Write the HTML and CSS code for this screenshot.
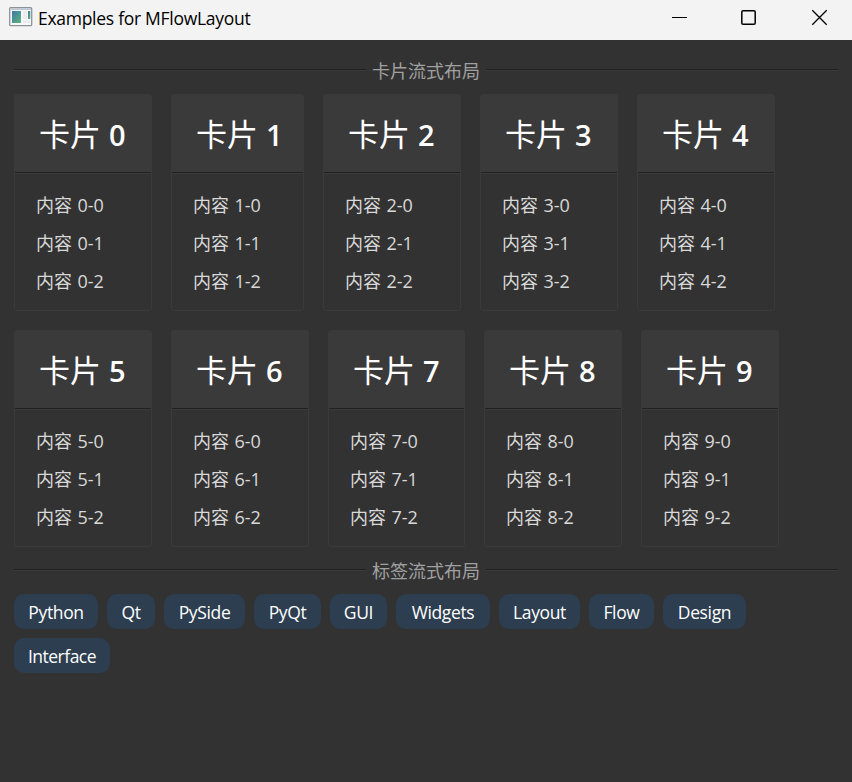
FILE: index.html
```
<!DOCTYPE html>
<html lang="zh-CN">
<head>
<meta charset="utf-8">
<title>Examples for MFlowLayout</title>
<link rel="stylesheet" href="styles.css">
</head>
<body>
<header class="titlebar">
  <svg class="app-icon" width="24" height="20" viewBox="0 0 24 20">
    <defs><linearGradient id="pane" x1="0" y1="0" x2="1" y2="1"><stop offset="0" stop-color="#3f78a8"/><stop offset="1" stop-color="#5fb57c"/></linearGradient></defs>
    <rect x="0.7" y="0.7" width="22" height="18" rx="1" fill="#f7f8f9" stroke="#8e9398" stroke-width="1.3"/>
    <rect x="1.5" y="1.3" width="20.5" height="1.6" fill="#b8c4d2"/>
    <rect x="3" y="4" width="9" height="12" fill="url(#pane)"/>
    <rect x="14" y="4" width="4" height="8" fill="#ececec"/>
    <rect x="19" y="4" width="2.3" height="8" fill="url(#pane)"/>
    <rect x="14" y="13.5" width="7" height="2.5" fill="#e9eaeb"/>
  </svg>
  <h1 class="window-title">Examples for MFlowLayout</h1>
  <div class="controls">
    <svg width="16" height="16" viewBox="0 0 16 16"><path d="M0 7.5h15" stroke="#000" fill="none"/></svg>
    <svg width="16" height="16" viewBox="0 0 16 16"><rect x="-0.2" y="0.8" width="13.4" height="13.4" rx="1.3" stroke="#000" stroke-width="1.5" fill="none"/></svg>
    <svg width="16" height="16" viewBox="0 0 16 16"><path d="M0.3 0.3l14.4 14.4M14.7 0.3L0.3 14.7" stroke="#000" stroke-width="1.3" fill="none"/></svg>
  </div>
</header>
<main class="content">
  <div class="divider"><span class="divider-text">卡片流式布局</span></div>
  <section class="cards">
    <article class="card"><h2>卡片 <b>0</b></h2><ul><li>内容 0-0</li><li>内容 0-1</li><li>内容 0-2</li></ul></article>
    <article class="card narrow"><h2>卡片 <b>1</b></h2><ul><li>内容 1-0</li><li>内容 1-1</li><li>内容 1-2</li></ul></article>
    <article class="card"><h2>卡片 <b>2</b></h2><ul><li>内容 2-0</li><li>内容 2-1</li><li>内容 2-2</li></ul></article>
    <article class="card"><h2>卡片 <b>3</b></h2><ul><li>内容 3-0</li><li>内容 3-1</li><li>内容 3-2</li></ul></article>
    <article class="card"><h2>卡片 <b>4</b></h2><ul><li>内容 4-0</li><li>内容 4-1</li><li>内容 4-2</li></ul></article>
    <article class="card"><h2>卡片 <b>5</b></h2><ul><li>内容 5-0</li><li>内容 5-1</li><li>内容 5-2</li></ul></article>
    <article class="card"><h2>卡片 <b>6</b></h2><ul><li>内容 6-0</li><li>内容 6-1</li><li>内容 6-2</li></ul></article>
    <article class="card snug"><h2>卡片 <b>7</b></h2><ul><li>内容 7-0</li><li>内容 7-1</li><li>内容 7-2</li></ul></article>
    <article class="card"><h2>卡片 <b>8</b></h2><ul><li>内容 8-0</li><li>内容 8-1</li><li>内容 8-2</li></ul></article>
    <article class="card"><h2>卡片 <b>9</b></h2><ul><li>内容 9-0</li><li>内容 9-1</li><li>内容 9-2</li></ul></article>
  </section>
  <div class="divider"><span class="divider-text">标签流式布局</span></div>
  <section class="tags">
    <span class="tag python">Python</span>
    <span class="tag qt">Qt</span>
    <span class="tag pyside">PySide</span>
    <span class="tag pyqt">PyQt</span>
    <span class="tag gui">GUI</span>
    <span class="tag widgets">Widgets</span>
    <span class="tag layout">Layout</span>
    <span class="tag flow">Flow</span>
    <span class="tag design">Design</span>
    <span class="tag interface">Interface</span>
  </section>
</main>
</body>
</html>
```
FILE: styles.css
```
* { box-sizing: border-box; }
body {
  margin: 0;
  height: 782px;
  overflow: hidden;
  background: #323232;
  color: #d9d9d9;
  font: 18px/24px "Open Sans", "Noto Sans CJK SC", sans-serif;
}
h1, h2, ul { margin: 0; padding: 0; font-weight: 400; list-style: none; }
.titlebar {
  display: flex;
  align-items: center;
  height: 40px;
  padding: 0 24px 5px 9px;
  background: #f3f3f3;
  color: #000;
}
.app-icon { margin-top: -2px; }
.window-title { margin-left: 5px; font-size: 17.5px; line-height: 24px; letter-spacing: -0.28px; white-space: nowrap; }
.controls { display: flex; gap: 54px; margin-left: auto; }
.controls svg { overflow: visible; }
.content { padding: 18px 14px 0; }
.divider { display: flex; align-items: center; height: 24px; color: #a0a0a0; }
.divider::before, .divider::after {
  content: "";
  flex: 1;
  height: 2px;
  margin-bottom: 1px;
  background: linear-gradient(#212121 50%, #3a3a3a 50%);
}
.divider-text { margin: 2px 6px 0; }
.cards { display: flex; flex-wrap: wrap; gap: 19px; width: 784px; padding: 12px 0 11px; }
.card { width: 138px; height: 217px; border: 1px solid #3a3a3a; border-radius: 3px; }
.card.narrow { width: 133px; }
.card.snug { width: 137px; }
.card h2 {
  height: 79px;
  padding-left: 24px;
  background: linear-gradient(#3a3a3a 77px, #212121 77px 78px, #3a3a3a 78px);
  color: #fff;
  font-size: 31px;
  line-height: 78px;
  white-space: nowrap;
}
.card b { font-size: 29px; font-weight: 600; }
.card ul { display: grid; gap: 14px; padding: 19px 0 0 21px; }
.card li { white-space: nowrap; word-spacing: 0.8px; }
.tags { display: flex; flex-wrap: wrap; gap: 9px; padding-top: 12px; }
.tag {
  height: 35px;
  border-radius: 10px;
  background: #2c3e50;
  color: #fff;
  font-size: 17.5px;
  line-height: 37px;
  letter-spacing: -0.35px;
  text-align: center;
  white-space: nowrap;
}
.python { width: 84px; }
.qt { width: 48px; }
.pyside { width: 81px; }
.pyqt { width: 67px; }
.gui { width: 57px; }
.widgets { width: 94px; }
.layout { width: 81px; }
.flow { width: 65px; }
.design { width: 83px; }
.interface { width: 96px; letter-spacing: -0.5px; }
```
